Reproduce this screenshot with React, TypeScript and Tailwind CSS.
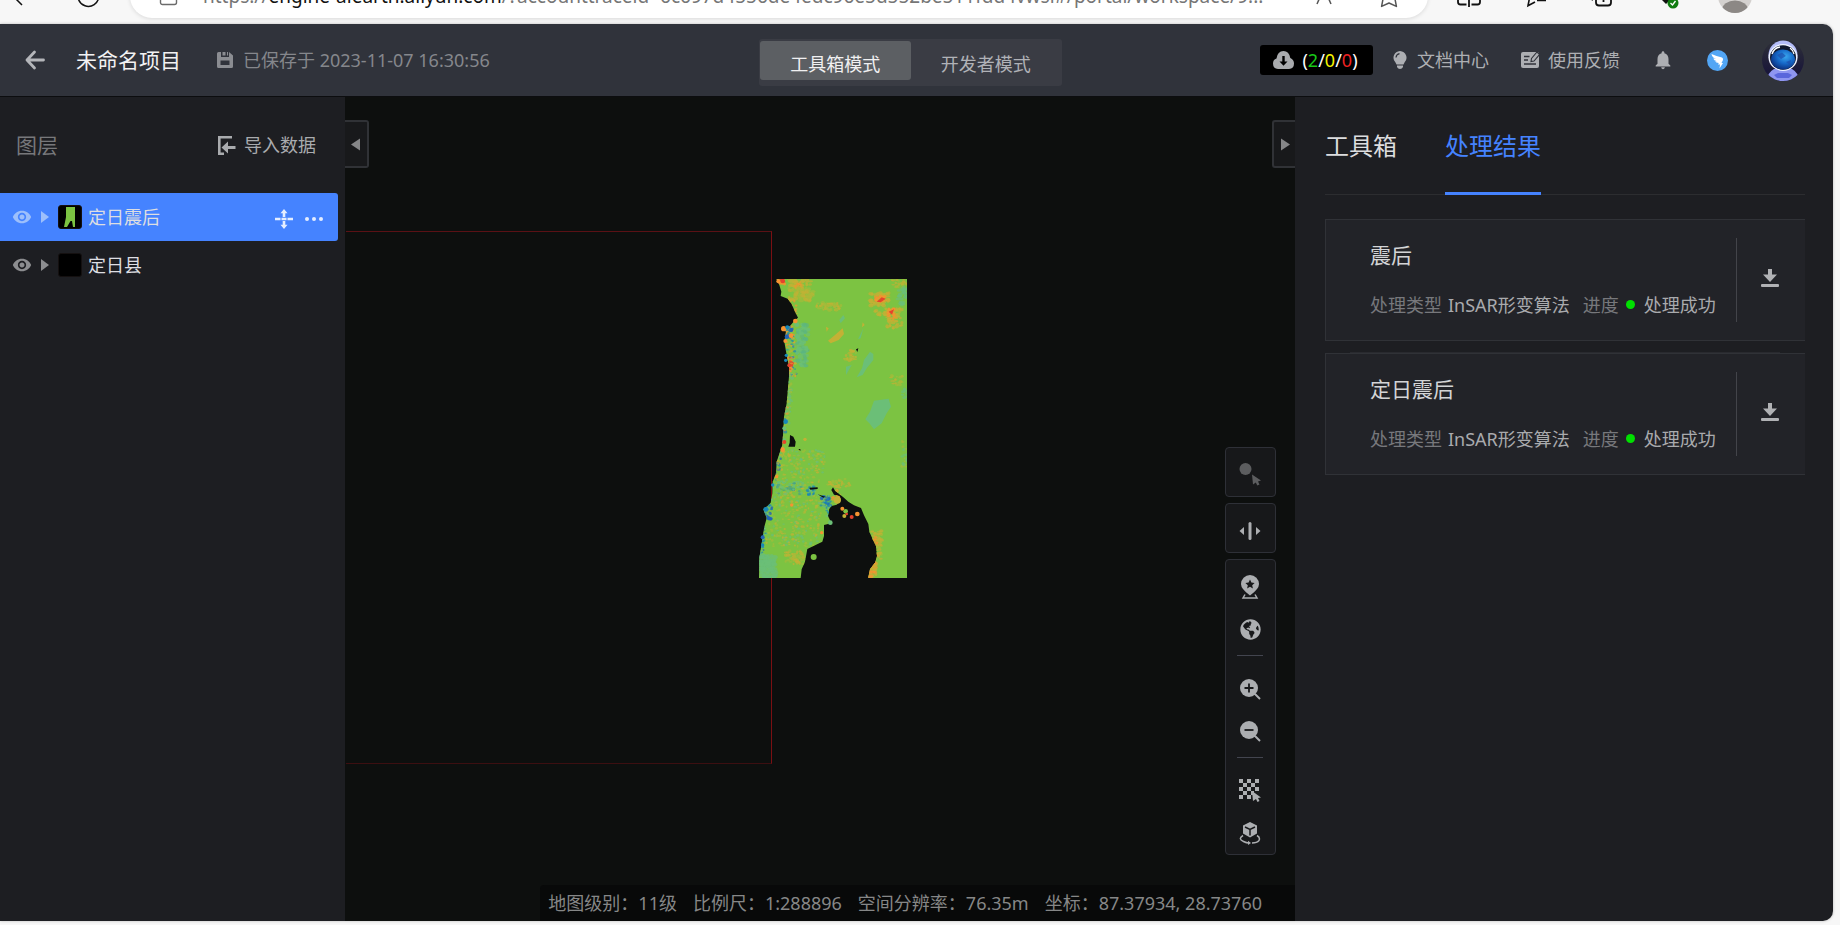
import { ReactNode } from 'react';
import { FaGlobeAmericas } from 'react-icons/fa';
import { MdNotifications, MdRemoveRedEye } from 'react-icons/md';

function BrowserBar() {
  return (
    <div className="flex h-6 shrink-0 items-end overflow-hidden">
      <div className="mb-[6px] flex h-11 w-full shrink-0 items-center text-[#111]">
        <button type="button" aria-label="Back" className="ml-[10px] flex w-6 justify-center">
          <svg width="24" height="24" viewBox="0 0 24 24" fill="none" stroke="currentColor" strokeWidth="1.5">
            <path d="M12 3 L3 12 L12 21 M3 12 H22" />
          </svg>
        </button>
        <button type="button" aria-label="Refresh" className="ml-[42px] flex w-6 justify-center">
          <svg width="24" height="24" viewBox="0 0 24 24" fill="none" stroke="currentColor" strokeWidth="1.5">
            <path d="M19 4 A10.4 10.4 0 1 1 12 1.6 M19 0 V5 H14" />
          </svg>
        </button>
        <div className="ml-[30px] flex h-11 min-w-0 flex-1 items-center rounded-full bg-white pr-[29px] pl-[29px] shadow-[0_1px_4px_rgba(0,0,0,0.12)]">
          <svg width="19" height="20" viewBox="0 0 19 20" fill="none" stroke="#6b6b6b" strokeWidth="1.4" className="shrink-0">
            <rect x="1.5" y="6" width="16" height="12.5" rx="2" />
            <path d="M5.5 6 V4 A4 4 0 0 1 13.5 4 V6" />
          </svg>
          <div className="ml-[25px] min-w-0 flex-1 text-[19px] leading-6 whitespace-nowrap text-[#767676]">
            https://<span className="text-[#111]">engine-aiearth.aliyun.com</span>
            /?accounttraceid=6c697d4556de4edc96e5d552be511fdd4vwsi#/portal/workspace/9...
          </div>
          <button type="button" aria-label="Read aloud" className="text-[#555]">
            <svg width="20" height="20" viewBox="0 0 20 20" fill="none" stroke="currentColor" strokeWidth="1.5">
              <path d="M2 18 L9 2 L16 18 M5 12 H13" />
            </svg>
          </button>
          <button type="button" aria-label="Favourite" className="ml-11 text-[#555]">
            <svg width="20" height="24" viewBox="0 0 20 24" fill="none" stroke="currentColor" strokeWidth="1.5" strokeLinejoin="round">
              <path d="M10 1 L12.6 8.5 L19 9.2 L16 15 L17.4 22.4 L10 19 L2.6 22.4 L4 15 L1 9.2 L7.4 8.5 Z" />
            </svg>
          </button>
        </div>
        <button type="button" aria-label="Split screen" className="ml-7">
          <svg width="26" height="24" viewBox="0 0 26 24" fill="none" stroke="currentColor" strokeWidth="1.8">
            <path d="M10.5 4 H4 Q2 4 2 6 V18 Q2 20.5 4.5 20.5 H10.5 M15.5 4 H22 Q24 4 24 6 V18 Q24 20.5 21.5 20.5 H15.5 M13 1 V23" />
          </svg>
        </button>
        <button type="button" aria-label="Favourites" className="ml-[42px]">
          <svg width="26" height="24" viewBox="0 0 26 24" fill="none" stroke="currentColor" strokeWidth="1.6">
            <path d="M11 18 L4 21.8 L5.5 14 L1 9 L8 8 L11 1 L14 8 M14 11.5 H24 M13 16.5 H22" />
          </svg>
        </button>
        <button type="button" aria-label="Collections" className="ml-[39px]">
          <svg width="26" height="24" viewBox="0 0 26 24" fill="none" stroke="currentColor" strokeWidth="1.8">
            <rect x="7" y="5" width="15" height="16.5" rx="3" />
            <path d="M14.5 9 V18 M10 13.5 H19 M4 16 Q1.5 15 2 11 L4 4" />
          </svg>
        </button>
        <button type="button" aria-label="Browser essentials" className="ml-[39px]">
          <svg width="26" height="26" viewBox="0 0 26 26">
            <path d="M12 21 L2 11 Q1 4 7 4 Q10 4 12 7 Q14 4 17 4 Q23 4 22 11 Z" fill="#111" />
            <circle cx="19" cy="20" r="5.5" fill="#107c10" />
            <path d="M16.5 20 L18.5 22 L21.5 18" stroke="#fff" strokeWidth="1.3" fill="none" />
          </svg>
        </button>
        <button type="button" aria-label="Profile" className="mr-[88px] ml-[38px]">
          <svg width="34" height="34" viewBox="0 0 34 34">
            <clipPath id="profile-clip"><circle cx="17" cy="17" r="17" /></clipPath>
            <g clipPath="url(#profile-clip)">
              <rect width="34" height="34" fill="#d4d1cf" />
              <ellipse cx="17" cy="31" rx="13" ry="9.5" fill="#8c8885" />
            </g>
          </svg>
        </button>
      </div>
    </div>
  );
}

function Header() {
  return (
    <header className="grid h-[73px] shrink-0 grid-cols-[1fr_auto_1fr] items-center rounded-tr-[10px] border-b border-[#0c0d0f] bg-[#30333b] pr-[29px] pl-[17px]">
      <div className="flex items-center whitespace-nowrap">
        <button type="button" aria-label="返回" className="flex h-8 w-9 items-center justify-center text-[#b4b6ba]">
          <svg width="20" height="20" viewBox="0 0 20 20" fill="none" stroke="currentColor" strokeWidth="2.8" strokeLinecap="round" strokeLinejoin="round">
            <path d="M9.5 2 L2 10 L9.5 18 M2 10 H18.5" />
          </svg>
        </button>
        <h1 className="ml-[23px] text-[21px] leading-7 text-[#f2f2f3]">未命名项目</h1>
        <svg width="16" height="16" viewBox="0 0 16 16" className="ml-9 text-[#8b8d92]" fill="currentColor">
          <path fillRule="evenodd" d="M1.5 0 H4 V5 H12 V0 L16 3.5 V14.5 Q16 16 14.5 16 H1.5 Q0 16 0 14.5 V1.5 Q0 0 1.5 0 Z M3.5 8.5 V13 H12.5 V8.5 Z" />
          <path d="M5.5 0 H8.5 V3.5 H5.5 Z M10 0 H11 V3.5 H10 Z" />
        </svg>
        <span className="ml-[10px] text-[18px] leading-6 text-[#85878c]">已保存于 2023-11-07 16:30:56</span>
      </div>

      <div className="mt-[5px] grid h-[47px] w-[303px] grid-cols-2 items-start rounded-[3px] bg-[#3a3c44] px-px pt-[2px] text-[18px]">
        <button type="button" className="h-[39px] rounded-[3px] bg-[#5c5f63] pt-[7px] leading-8 text-[#f0f0f1]">工具箱模式</button>
        <button type="button" className="h-[39px] pt-[7px] leading-8 text-[#b0b2b7]">开发者模式</button>
      </div>

      <div className="flex items-center justify-end text-[18px] leading-6 whitespace-nowrap text-[#adafb3]">
        <button type="button" className="flex h-[30px] w-[113px] items-center justify-center gap-2 rounded-[3px] bg-black pr-[2px] text-white">
          <svg width="21" height="18" viewBox="0 0 21 18" className="text-[#a9abae]">
            <path fill="currentColor" d="M5 18 Q0 17.5 0 12.5 Q0 8.5 3.5 7.5 Q4.5 0 10.5 0 Q16 0 17.3 7 Q21 8.5 21 12.5 Q21 17.5 16 18 Z" />
            <path fill="#000" d="M9.3 5 H11.7 V10.5 H14.5 L10.5 14.8 L6.5 10.5 H9.3 Z" />
          </svg>
          <span>(<span className="text-[#18c818]">2</span>/<span className="text-[#f4f400]">0</span>/<span className="text-[#e22]">0</span>)</span>
        </button>
        <a href="#docs" className="ml-5 flex items-center">
          <svg width="14" height="18" viewBox="0 0 14 18" fill="currentColor">
            <path d="M7 0 A7 6.8 0 0 1 11.5 11.5 L10.5 13.5 H3.5 L2.5 11.5 A7 6.8 0 0 1 7 0 Z" />
            <path d="M4 14.5 H10 V16 Q9 18 7 18 Q5 18 4 16 Z" />
            <path d="M3 6.5 Q3.3 3.2 6.5 2.6" stroke="#30333b" strokeWidth="1.2" fill="none" />
          </svg>
          <span className="ml-[10px]">文档中心</span>
        </a>
        <a href="#feedback" className="ml-8 flex items-center">
          <svg width="18" height="16" viewBox="0 0 18 16">
            <rect width="18" height="16" rx="2" fill="currentColor" />
            <path d="M3 4.5 H8.5 M3 8 H7 M3 12 H15" stroke="#30333b" strokeWidth="1.4" />
            <path d="M10 9.5 L10.5 6.5 L16 0 L18.5 2.5 L13 9 Z" fill="currentColor" stroke="#30333b" strokeWidth="1.1" />
          </svg>
          <span className="ml-[9px]">使用反馈</span>
        </a>
        <button type="button" aria-label="通知" className="ml-8 flex">
          <MdNotifications size={22} />
        </button>
        <button type="button" aria-label="钉钉" className="ml-[33px] flex">
          <svg width="21" height="21" viewBox="0 0 21 21">
            <circle cx="10.5" cy="10.5" r="10.5" fill="#52a6f5" />
            <path fill="#fff" d="M4.5 4 Q10 6.5 15 7.5 Q16.8 8.5 15.8 10.5 L14.5 13 H16 L12.5 18.5 L13 14.5 H11 L11.8 13 Q9 13 8 11.3 L10 11.3 Q6.8 10.5 6.2 8.6 L9 9 Q5 7.5 4.5 4 Z" />
          </svg>
        </button>
        <button type="button" aria-label="账号" className="ml-[34px] flex">
          <svg width="42" height="42" viewBox="0 0 42 42">
            <defs>
              <clipPath id="avatar-clip"><circle cx="21" cy="21" r="21" /></clipPath>
              <radialGradient id="visor" cx="0.6" cy="0.35" r="0.7">
                <stop offset="0" stopColor="#3aa8f0" />
                <stop offset="0.5" stopColor="#1668c8" />
                <stop offset="1" stopColor="#0a2a78" />
              </radialGradient>
              <linearGradient id="avatar-back" x1="0" y1="0" x2="0" y2="1">
                <stop offset="0" stopColor="#2f3138" />
                <stop offset="1" stopColor="#14103a" />
              </linearGradient>
            </defs>
            <g clipPath="url(#avatar-clip)">
              <rect width="42" height="42" fill="url(#avatar-back)" />
              <path d="M5 42 Q5 34 12 30 H30 Q37 34 37 42 Z" fill="#8f96f0" />
              <path d="M12 36 L16 34 H26 L30 36 L27 39 H15 Z" fill="#5a66dc" />
              <circle cx="21" cy="16" r="14.5" fill="#b3bcf8" />
              <ellipse cx="21" cy="18.5" rx="14.5" ry="13.5" fill="#eef3ff" />
              <ellipse cx="21" cy="18.5" rx="13" ry="12.2" fill="#10182e" />
              <ellipse cx="21" cy="20.5" rx="12" ry="10" fill="url(#visor)" />
              <path d="M15 16 L20 13.5 L24 17 L19 20 Z M24 23 L29 21 L28 26 Z" fill="#1d4fae" opacity="0.7" />
              <path d="M10 15 Q12 9 18 8" stroke="#fff" strokeWidth="1.5" fill="none" />
              <path d="M28 9 Q31 11 32 15" stroke="#fff" strokeWidth="1.2" fill="none" />
            </g>
          </svg>
        </button>
      </div>
    </header>
  );
}

function Caret() {
  return (
    <svg width="8" height="12" viewBox="0 0 8 12" fill="currentColor">
      <path d="M0 0 L8 6 L0 12 Z" />
    </svg>
  );
}

function LayerRow({ name, active, thumb }: { name: string; active?: boolean; thumb?: ReactNode }) {
  return (
    <li
      className={
        active
          ? 'mr-[7px] flex h-12 items-center rounded-r-[3px] bg-[#4583ff] pr-[15px] pl-[12px] text-[#9dbffb]'
          : 'mr-[7px] flex h-12 items-center pr-[15px] pl-[12px] text-[#8c8d90]'
      }
    >
      <button type="button" aria-label={`显示 ${name}`} className="flex">
        <MdRemoveRedEye size={20} />
      </button>
      <button type="button" aria-label={`展开 ${name}`} className="ml-[9px] flex">
        <Caret />
      </button>
      <span className="ml-[9px] flex h-6 w-6 items-center justify-center rounded-[3px] border border-[#141010] bg-black">{thumb}</span>
      <span className="ml-[6px] text-[18px] leading-6 text-[#dddee2]">{name}</span>
      {active && (
        <span className="ml-auto flex items-center gap-3 pt-[3px] text-[#e4edff]">
          <button type="button" aria-label="移动图层" className="flex">
            <svg width="18" height="20" viewBox="0 0 18 20" fill="currentColor">
              <path d="M9 0 L12.5 4.2 H10.3 V8 H7.7 V4.2 H5.5 Z M9 20 L5.5 15.8 H7.7 V12 H10.3 V15.8 H12.5 Z" />
              <path d="M0 8.8 H5.5 V11.2 H0 Z M6.5 8.8 H11.5 V11.2 H6.5 Z M12.5 8.8 H18 V11.2 H12.5 Z" />
            </svg>
          </button>
          <button type="button" aria-label="更多" className="flex">
            <svg width="18" height="4" viewBox="0 0 18 4" fill="currentColor">
              <circle cx="2" cy="2" r="2" />
              <circle cx="9" cy="2" r="2" />
              <circle cx="16" cy="2" r="2" />
            </svg>
          </button>
        </span>
      )}
    </li>
  );
}

function LayerPanel() {
  return (
    <aside className="w-[345px] shrink-0 bg-[#1d1e22]">
      <div className="flex h-24 items-center justify-between pr-[29px] pl-4">
        <h2 className="text-[21px] leading-7 text-[#77787b]">图层</h2>
        <button type="button" className="flex items-center gap-2 text-[18px] leading-6 text-[#a9abae]">
          <svg width="18" height="19" viewBox="0 0 18 19" fill="none" stroke="currentColor">
            <path d="M14 1.3 H1.3 V17.7 H6" strokeWidth="2.6" />
            <path d="M3.5 11.5 L10 5.5 V10 H17.5 V13 H10 V17.5 Z" fill="currentColor" stroke="none" />
          </svg>
          导入数据
        </button>
      </div>
      <ul>
        <LayerRow
          name="定日震后"
          active
          thumb={
            <svg width="12" height="20" viewBox="0 0 12 20">
              <path d="M2 0 H11 V20 H9 L8 14 H6.5 L3 20 H0 L2 10 Z" fill="#7cc342" />
            </svg>
          }
        />
        <LayerRow name="定日县" />
      </ul>
    </aside>
  );
}

// Small seeded generator (mulberry32), so the speckles stay put between renders.
function randomSource(seed: number) {
  let state = seed;
  return () => {
    state = (state + 0x6d2b79f5) | 0;
    let t = Math.imul(state ^ (state >>> 15), 1 | state);
    t = (t + Math.imul(t ^ (t >>> 7), 61 | t)) ^ t;
    return ((t ^ (t >>> 14)) >>> 0) / 4294967296;
  };
}

type Zone = { x: number; y: number; w: number; h: number; n: number; r: number; lean: number; colors: string[] };

const ORANGE = '#f59331';
const OCHRE = '#c3b135';
const OLIVE = '#a2bc3b';
const RED = '#e5432c';
const BLUE = '#1787b8';
const DEEP = '#2362b5';
const TEAL = '#6bbf77';

const zones: Zone[] = [
  { x: 145, y: 57, w: 75, h: 66, n: 90, r: 10, lean: 0, colors: [OCHRE, OLIVE, OCHRE] },
  { x: 112, y: 57, w: 24, h: 16, n: 18, r: 7, lean: 0, colors: [RED, ORANGE] },
  { x: 165, y: 62, w: 18, h: 24, n: 16, r: 6, lean: 0, colors: [ORANGE, OCHRE] },
  { x: 228, y: 127, w: 78, h: 24, n: 44, r: 8, lean: -0.2, colors: [OCHRE, OLIVE] },
  { x: 392, y: 97, w: 62, h: 40, n: 50, r: 9, lean: -0.2, colors: [OCHRE, OCHRE] },
  { x: 405, y: 107, w: 40, h: 20, n: 26, r: 7, lean: -0.2, colors: [ORANGE] },
  { x: 405, y: 145, w: 75, h: 22, n: 26, r: 8, lean: 0, colors: [OCHRE] },
  { x: 440, y: 145, w: 46, h: 60, n: 44, r: 9, lean: 0, colors: [OCHRE] },
  { x: 444, y: 145, w: 26, h: 34, n: 24, r: 7, lean: 0, colors: [ORANGE] },
  { x: 455, y: 60, w: 45, h: 22, n: 22, r: 7, lean: 0, colors: [OLIVE, OCHRE] },
  { x: 475, y: 80, w: 26, h: 55, n: 28, r: 10, lean: 0, colors: [TEAL] },
  { x: 322, y: 268, w: 36, h: 34, n: 30, r: 7, lean: -0.4, colors: [OCHRE, OCHRE, OLIVE] },
  { x: 452, y: 347, w: 36, h: 28, n: 20, r: 7, lean: 0, colors: [OCHRE, OLIVE] },
  { x: 168, y: 190, w: 36, h: 130, n: 90, r: 11, lean: 0, colors: [TEAL, TEAL, '#5bb582'] },
  { x: 148, y: 300, w: 15, h: 190, n: 60, r: 8, lean: -0.08, colors: [TEAL, OLIVE] },
  { x: 138, y: 200, w: 22, h: 36, n: 30, r: 7, lean: 0, colors: [BLUE, DEEP, ORANGE, BLUE] },
  { x: 138, y: 235, w: 26, h: 115, n: 70, r: 6, lean: 0.05, colors: [ORANGE, BLUE, OCHRE, TEAL] },
  { x: 143, y: 290, w: 14, h: 45, n: 24, r: 6, lean: 0.1, colors: [RED, ORANGE] },
  { x: 145, y: 120, w: 26, h: 50, n: 20, r: 7, lean: 0, colors: [ORANGE, OCHRE] },
  { x: 130, y: 440, w: 14, h: 125, n: 44, r: 7, lean: -0.1, colors: [ORANGE, BLUE, TEAL, OCHRE] },
  { x: 118, y: 570, w: 140, h: 140, n: 220, r: 6, lean: -0.1, colors: [OLIVE, OCHRE, OLIVE, TEAL] },
  { x: 100, y: 665, w: 90, h: 38, n: 50, r: 7, lean: 0, colors: ['#45a08a', TEAL, TEAL] },
  { x: 106, y: 575, w: 20, h: 90, n: 34, r: 6, lean: -0.15, colors: [BLUE, DEEP, OCHRE] },
  { x: 203, y: 678, w: 22, h: 28, n: 22, r: 7, lean: 0, colors: [BLUE, TEAL, BLUE] },
  { x: 242, y: 707, w: 32, h: 32, n: 36, r: 7, lean: 0, colors: [BLUE, DEEP, TEAL] },
  { x: 258, y: 742, w: 12, h: 30, n: 12, r: 6, lean: 0, colors: [BLUE, TEAL] },
  { x: 262, y: 657, w: 70, h: 26, n: 34, r: 7, lean: 0, colors: [OCHRE, OLIVE] },
  { x: 278, y: 690, w: 24, h: 30, n: 18, r: 7, lean: 0, colors: [OCHRE, ORANGE] },
  { x: 92, y: 710, w: 156, h: 150, n: 240, r: 6, lean: -0.1, colors: [OLIVE, OCHRE, OLIVE, TEAL] },
  { x: 72, y: 735, w: 24, h: 50, n: 34, r: 8, lean: 0, colors: [BLUE, DEEP, TEAL] },
  { x: 64, y: 800, w: 14, h: 110, n: 40, r: 6, lean: -0.05, colors: [BLUE, DEEP, TEAL] },
  { x: 57, y: 885, w: 52, h: 70, n: 80, r: 12, lean: 0, colors: [TEAL] },
  { x: 135, y: 872, w: 55, h: 42, n: 50, r: 8, lean: 0, colors: [OCHRE, OLIVE] },
  { x: 392, y: 805, w: 34, h: 95, n: 80, r: 8, lean: 0, colors: [OCHRE, OLIVE, OCHRE] },
  { x: 386, y: 830, w: 26, h: 60, n: 24, r: 6, lean: 0, colors: [ORANGE] },
  { x: 388, y: 905, w: 20, h: 45, n: 40, r: 9, lean: 0, colors: [ORANGE, ORANGE, OCHRE] },
  { x: 486, y: 540, w: 15, h: 80, n: 20, r: 7, lean: 0, colors: [TEAL, OLIVE] },
  { x: 486, y: 385, w: 15, h: 30, n: 10, r: 8, lean: 0, colors: [TEAL] },
];

const random = randomSource(7);
const speckles = zones.flatMap((zone) =>
  Array.from({ length: zone.n }, () => {
    const y = random() * zone.h;
    return {
      cx: zone.x + random() * zone.w + y * zone.lean,
      cy: zone.y + y,
      rx: zone.r * (0.4 + random() * 0.5),
      ry: zone.r * (0.3 + random() * 0.4),
      fill: zone.colors[Math.floor(random() * zone.colors.length)],
    };
  }),
);

const coastDots = [
  [115, 64, 6, ORANGE], [128, 63, 7, RED], [131, 206, 8, ORANGE], [142, 202, 6, BLUE], [154, 210, 6, DEEP],
  [166, 183, 7, ORANGE], [141, 230, 7, DEEP], [153, 227, 7, ORANGE], [136, 243, 6, ORANGE], [139, 286, 5, BLUE],
  [137, 301, 5, BLUE], [148, 316, 6, RED], [137, 485, 7, BLUE], [133, 505, 6, TEAL], [133, 546, 6, RED],
  [128, 569, 7, ORANGE], [195, 538, 5, OCHRE], [110, 650, 5, ORANGE], [98, 675, 5, BLUE], [155, 735, 5, ORANGE],
  [77, 748, 7, BLUE], [86, 775, 6, DEEP], [68, 832, 6, DEEP], [68, 855, 5, BLUE], [271, 788, 7, TEAL], [245, 818, 5, ORANGE],
  [292, 720, 11, OCHRE], [307, 746, 6, ORANGE], [317, 754, 7, '#7cc342'], [313, 768, 6, OCHRE], [335, 771, 6, RED],
  [352, 762, 7, ORANGE], [221, 891, 9, '#7cc342'], [320, 762, 4, RED],
] as const;

const COAST =
  'M109 57 H501 V954 H384 L390 928 L405 908 L411 888 L408 858 L398 838 L388 815 L385 792 L372 766 L363 744 L342 736 L325 725 L310 712 L285 692 L279 682 L274 690 L282 704 L298 708 L302 722 L290 734 L275 738 L268 746 L264 768 L274 788 L264 792 L252 795 L252 828 L247 845 L202 867 L195 905 L185 928 L182 954 H57 L58 895 L65 850 L73 800 L80 775 L70 748 L80 740 L92 728 L97 700 L98 665 L108 640 L110 605 L120 575 L127 555 L130 510 L132 470 L140 430 L143 395 L147 350 L147 320 L140 285 L133 245 L138 215 L130 207 L150 198 L165 180 L174 173 L165 155 L155 132 L143 116 L122 108 L124 95 L118 75 Z';

function DeformationMap() {
  return (
    <svg className="absolute top-[182px] left-[414px]" width="148" height="299" viewBox="57 57 444 897" role="img" aria-label="定日震后">
      <clipPath id="coast"><path d={COAST} /></clipPath>
      <path d={COAST} fill="#7cc342" />
      <g clipPath="url(#coast)">
        <path d="M402 422 L446 416 L453 440 L440 460 L425 490 L402 508 L388 490 L376 478 L390 455 Z" fill={TEAL} />
        <path d="M390 275 L400 282 L400 300 L380 325 L368 345 L350 352 L366 325 L372 300 Z M318 320 L335 315 L318 345 Z M310 165 L315 175 L302 190 L298 180 Z M370 205 L362 235 L354 238 Z" fill={TEAL} />
        <path d="M308 205 L312 222 L296 240 L272 250 L264 242 L285 225 Z M258 200 L266 205 L260 215 Z M368 187 L374 195 L366 202 Z" fill={OCHRE} />
        {speckles.map((s, i) => (
          <ellipse key={i} {...s} opacity={0.7} />
        ))}
        <path d="M410 125 L425 112 L437 116 L422 127 Z M446 155 L462 148 L456 164 Z" fill={RED} />
      </g>
      {coastDots.map(([cx, cy, r, fill], i) => (
        <circle key={i} cx={cx} cy={cy} r={r} fill={fill} />
      ))}
      <path d="M150 525 L160 530 L167 545 L165 560 H145 L149 548 Z M208 683 L233 682 V687 L211 689 Z M233 703 L256 710 L250 713 Z M348 268 L355 265 L352 276 Z M175 567 H181 V573 Z" fill="#0d0f0e" />
    </svg>
  );
}

function ToolButton({ label, children }: { label: string; children: ReactNode }) {
  return (
    <button type="button" aria-label={label} className="flex h-[42px] w-full items-center justify-center">
      <svg width="22" height="24" viewBox="0 0 22 24" fill="currentColor">{children}</svg>
    </button>
  );
}

function MapTools() {
  const box = 'w-[51px] rounded-[4px] border border-[#2e3037] bg-[#17181a] pr-px';
  return (
    <div className="absolute right-[19px] bottom-[66px] flex flex-col gap-[6px] text-[#acaeb1]">
      <div className={`${box} flex h-[50px] items-center pt-[6px] text-[#5c5d5f]`}>
        <ToolButton label="拾取">
          <circle cx="6.5" cy="6" r="6" />
          <path d="M13 11.5 L22 17.5 L19 18.5 L20.5 21.5 L18.3 22.5 L16.8 19.5 L14 21.5 Z" />
        </ToolButton>
      </div>
      <div className={`${box} flex h-[50px] items-center pt-[6px]`}>
        <ToolButton label="卷帘">
          <rect x="9.5" y="3" width="3" height="18" rx="1.5" />
          <path d="M5 8 V16 L0.5 12 Z M17 8 V16 L21.5 12 Z" />
        </ToolButton>
      </div>
      <div className={`${box} flex flex-col items-center pt-[6px]`}>
        <ToolButton label="定位">
          <path d="M11 0 A9 9 0 0 1 20 9 Q20 14 11 20.5 Q2 14 2 9 A9 9 0 0 1 11 0 Z" />
          <path d="M11 4.5 L12.4 7.6 L15.6 8 L13.2 10.2 L13.9 13.5 L11 11.8 L8.1 13.5 L8.8 10.2 L6.4 8 L9.6 7.6 Z" fill="#17181a" />
          <path d="M6 19.5 L4 23 H18 L16 19.5" fill="none" stroke="currentColor" strokeWidth="1.5" />
        </ToolButton>
        <button type="button" aria-label="全球" className="flex h-[42px] w-full items-center justify-center">
          <FaGlobeAmericas size={21} />
        </button>
        <hr className="mt-[5px] mb-[12px] w-[26px] border-[#43454f]" />
        <ToolButton label="放大">
          <circle cx="10" cy="11" r="9" />
          <path d="M10 6.5 V15.5 M5.5 11 H14.5" stroke="#17181a" strokeWidth="1.8" />
          <path d="M16 17 L21 22" stroke="currentColor" strokeWidth="2" />
        </ToolButton>
        <ToolButton label="缩小">
          <circle cx="10" cy="11" r="9" />
          <path d="M5.5 11 H14.5" stroke="#17181a" strokeWidth="1.8" />
          <path d="M16 17 L21 22" stroke="currentColor" strokeWidth="2" />
        </ToolButton>
        <hr className="mt-[5px] mb-[12px] w-[26px] border-[#43454f]" />
        <ToolButton label="像元">
          <path d="M0 0 h4 v4 h-4z M8 0 h4 v4 h-4z M16 0 h4 v4 h-4z M4 4 h4 v4 h-4z M12 4 h4 v4 h-4z M0 8 h4 v4 h-4z M8 8 h4 v4 h-4z M16 8 h4 v4 h-4z M4 12 h4 v4 h-4z M12 12 h3 v4 h-3z M0 16 h4 v4 h-4z M8 16 h4 v4 h-4z" />
          <path d="M13 12 L22 18.5 L19 19 L20.5 22 L18.5 23 L17 20 L14 22 Z" />
        </ToolButton>
        <ToolButton label="三维">
          <path d="M11 1 L18 4.5 V12.5 L11 16.5 L4 12.5 V4.5 Z" />
          <path d="M6 6 L11 8.5 L16 6 M11 8.5 V14.5" fill="none" stroke="#17181a" strokeWidth="1.5" />
          <path d="M4 14.5 Q-1.500 18 4.500 20.5 Q7.500 22 10 22 M13 22 Q18 22 20 19.500 Q21.500 16.5 18 14.5" fill="none" stroke="currentColor" strokeWidth="1.5" />
          <path d="M9 19.8 L12 22 L9 24 Z" />
        </ToolButton>
      </div>
    </div>
  );
}

function MapView() {
  return (
    <main className="relative min-w-0 flex-1 overflow-hidden bg-[#0d0f0e]">
      <div className="absolute top-[134px] left-px h-[533px] w-[426px] border-t border-r border-b border-t-[#5a1115] border-r-[#7a1013] border-b-[#3c0f11]" />
      <DeformationMap />
      <button type="button" aria-label="收起图层" className="absolute top-[23px] left-0 flex h-12 w-6 items-center justify-center rounded-r-[3px] border-2 border-l-0 border-[#303236] bg-[#18191b] pr-[2px] text-[#858688]">
        <svg width="9" height="13" viewBox="0 0 9 13" fill="currentColor"><path d="M9 0.5 V12.5 L0 6.5 Z" /></svg>
      </button>
      <button type="button" aria-label="收起工具箱" className="absolute top-[23px] right-0 flex h-12 w-[23px] items-center justify-center rounded-l-[3px] border-2 border-r-0 border-[#303236] bg-[#18191b] pl-[2px] text-[#858688]">
        <svg width="9" height="13" viewBox="0 0 9 13" fill="currentColor"><path d="M0 0.5 V12.5 L9 6.5 Z" /></svg>
      </button>
      <MapTools />
      <div className="absolute right-0 bottom-0 flex h-9 items-center gap-4 rounded-tl-[4px] bg-[#080909] pr-[33px] pl-[8px] text-[18px] leading-6 whitespace-nowrap text-[#868787]">
        <span>地图级别：11级</span>
        <span>比例尺：1:288896</span>
        <span>空间分辨率：76.35m</span>
        <span>坐标：87.37934, 28.73760</span>
      </div>
    </main>
  );
}

function ResultCard({ name }: { name: string }) {
  return (
    <article className="flex h-[122px] items-center border-y border-l border-[#303237] bg-[#222328]">
      <div className="min-w-0 flex-1 pb-[3px] pl-[44px] whitespace-nowrap">
        <h3 className="text-[21px] leading-7 text-[#d3d4d6]">{name}</h3>
        <p className="mt-6 flex items-center text-[18px] leading-6 text-[#a9aaad]">
          <span className="text-[#77787c]">处理类型</span>
          <span className="ml-[6px]">InSAR形变算法</span>
          <span className="ml-[13px] text-[#77787c]">进度</span>
          <span className="ml-[7px] h-[9px] w-[9px] rounded-full bg-[#00e000]" />
          <span className="ml-[9px]">处理成功</span>
        </p>
      </div>
      <div className="flex h-[84px] w-[69px] items-center justify-center border-l border-[#43444a] pr-[2px] pb-1">
        <button type="button" aria-label={`下载 ${name}`} className="flex text-[#b0b1b4]">
          <svg width="18" height="18" viewBox="0 0 18 18" fill="currentColor">
            <path d="M7 0 H11 V5.5 H16 L9 13 L2 5.5 H7 Z" />
            <rect y="15" width="18" height="3" rx="1" />
          </svg>
        </button>
      </div>
    </article>
  );
}

function ResultPanel() {
  return (
    <aside className="w-[538px] shrink-0 rounded-br-[10px] bg-[#1d1e22] pr-[28px] pl-[30px]">
      <nav className="flex h-[98px] gap-12 border-b border-[#2c2d30] text-2xl">
        <button type="button" className="text-[#dcdddf]">工具箱</button>
        <button type="button" className="-mb-px border-t-[3px] border-b-[3px] border-t-transparent border-b-[#4583ff] text-[#4583ff]">处理结果</button>
      </nav>
      <div className="mt-6">
        <ResultCard name="震后" />
        <hr className="mx-[25px] mt-[11px] border-[#292a2f]" />
        <ResultCard name="定日震后" />
      </div>
    </aside>
  );
}

export default function App() {
  return (
    <div className="flex min-h-screen flex-col bg-[#f7f7f7] pb-1 font-['Noto_Sans','Noto_Sans_CJK_SC',sans-serif]">
      <BrowserBar />
      <div className="mr-[7px] flex flex-1 flex-col rounded-r-[10px] shadow-[0_0_3px_rgba(0,0,0,0.25)]">
        <Header />
        <div className="flex flex-1">
          <LayerPanel />
          <MapView />
          <ResultPanel />
        </div>
      </div>
    </div>
  );
}
